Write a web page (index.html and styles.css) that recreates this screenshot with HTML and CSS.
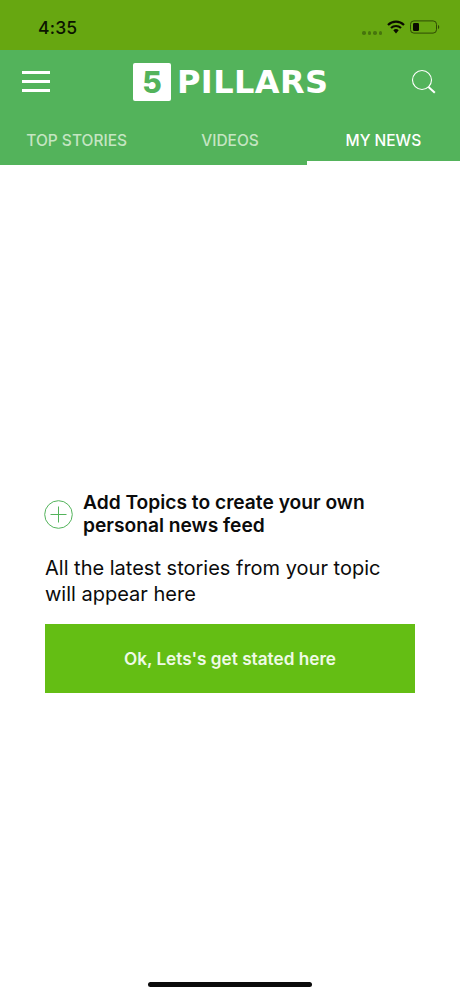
FILE: index.html
```html
<!DOCTYPE html>
<html lang="en">
<head>
<meta charset="utf-8">
<title>5 Pillars</title>
<link rel="stylesheet" href="styles.css">
</head>
<body>
<div class="phone">
  <div class="status">
    <span class="time">4:35</span>
    <div class="status-icons">
      <span class="dots"><i></i><i></i><i></i><i></i></span>
      <svg class="wifi" width="18" height="14" viewBox="0 0 18 14"><path d="M1 5a11.400 11.400 0 0 1 16 0" fill="none" stroke="#0b0b00" stroke-width="2.200"/><path d="M4 8a7.200 7.200 0 0 1 10 0" fill="none" stroke="#0b0b00" stroke-width="2.200"/><path d="M6.300 10.300a3.800 3.800 0 0 1 5.400 0L9 13.500z" fill="#0b0b00"/></svg>
      <svg class="battery" width="30" height="14" viewBox="0 0 30 14"><rect x="0.500" y="0.900" width="26" height="12.200" rx="3.400" fill="none" stroke="#2f4a05"/><rect x="3" y="3" width="6" height="8" rx="1.200" fill="#0b0b00"/><path d="M28 5v4c.8-.3 1.200-1 1.200-2s-.4-1.700-1.200-2z" fill="#2f4a05"/></svg>
    </div>
  </div>
  <header class="appbar">
    <div class="topbar">
      <button class="icon-btn menu" aria-label="Menu"><span></span><span></span><span></span></button>
      <div class="logo"><span class="logo-box">5</span><span class="logo-text">PILLARS</span></div>
      <button class="icon-btn search" aria-label="Search">
        <svg width="26" height="26" viewBox="0 0 26 26"><circle cx="11" cy="11" r="9.500" fill="none" stroke="#fff" stroke-width="1.100"/><path d="M17.500 18l6.300 5.800" stroke="#fff" stroke-width="2" fill="none"/></svg>
      </button>
    </div>
    <nav class="tabs">
      <a class="tab">TOP STORIES</a>
      <a class="tab">VIDEOS</a>
      <a class="tab active">MY NEWS</a>
    </nav>
  </header>
  <main class="content">
    <div class="topic-row">
      <svg class="plus" width="29" height="29" viewBox="0 0 29 29"><circle cx="14.500" cy="14.500" r="13.800" fill="none" stroke="#53b35b" stroke-width="1"/><path d="M14.500 6.500v16M6.500 14.500h16" stroke="#53b35b" stroke-width="1" fill="none"/></svg>
      <h2 class="topic-title">Add Topics to create your own personal news feed</h2>
    </div>
    <p class="lead">All the latest stories from your topic will appear here</p>
    <button class="cta">Ok, Lets's get stated here</button>
  </main>
  <div class="home-indicator"></div>
</div>
</body>
</html>
```
FILE: styles.css
```css
* { box-sizing: border-box; }
html, body { margin: 0; padding: 0; background: #fff; }
body { font-family: Inter, "Liberation Sans", sans-serif; }
.phone { width: 460px; height: 996px; display: flex; flex-direction: column; overflow: hidden; position: relative; background: #fff; }

.status { height: 50px; flex: none; background: #67a711; display: flex; justify-content: space-between; padding: 0 20px 0 38px; }
.time { font-size: 17.500px; font-weight: 500; color: #0b1400; line-height: 20px; margin-top: 18px; letter-spacing: 0.2px; }
.status-icons { display: flex; align-items: flex-start; padding-top: 20px; }
.dots { display: flex; gap: 2px; margin-top: 11px; margin-right: 5px; }
.dots i { width: 3.500px; height: 3.500px; border-radius: 50%; background: #47750d; }
.wifi { margin-right: 5px; }

.appbar { flex: none; height: 115px; background: #53b35b; display: flex; flex-direction: column; }
.topbar { height: 66px; display: flex; align-items: center; justify-content: space-between; padding: 0 23px 0 22px; position: relative; }
.icon-btn { background: none; border: 0; padding: 0; }
.menu { width: 28px; display: flex; flex-direction: column; gap: 6px; margin-top: -3px; }
.menu span { display: block; height: 3px; background: #fff; }
.search { width: 26px; height: 26px; margin-top: -2px; }
.search svg { display: block; }
.logo { position: absolute; left: 133px; top: 13px; display: flex; align-items: center; gap: 6px; }
.logo-box { width: 38px; height: 38px; background: #fff; border-radius: 2px; color: #53b35b; font-size: 30px; font-weight: 800; display: flex; align-items: center; justify-content: center; position: relative; }
.logo-box::after { content: ""; position: absolute; left: 16px; top: 22px; width: 4px; height: 4px; border-radius: 50%; background: #fff; }
.logo-text { color: #fff; font-family: "DejaVu Sans", sans-serif; font-weight: 700; font-size: 32px; letter-spacing: 0.400px; line-height: 38px; }

.tabs { flex: 1; display: grid; grid-template-columns: repeat(3, 1fr); }
.tab { display: flex; align-items: center; justify-content: center; font-size: 15.500px; font-weight: 500; color: #c5e5c2; }
.tab.active { color: #fff; border-bottom: 4px solid #fff; padding-top: 4px; }

.content { padding: 326px 45px 0; flex: 1; }
.topic-row { display: flex; align-items: center; gap: 10px; margin-left: -1px; }
.plus { flex: none; }
.topic-title { margin: 0; font-size: 19.200px; font-weight: 600; line-height: 23px; color: #0b0b0b; }
.lead { margin: 18px 0 0; font-size: 20px; line-height: 26px; font-weight: 400; color: #0b0b0b; width: 360px; }
.cta { display: block; width: 370px; height: 69px; margin-top: 17px; border: 0; background: #64be14; color: #effae6; font-family: Inter, sans-serif; font-size: 17.200px; font-weight: 600; }

.home-indicator { position: absolute; left: 148px; bottom: 9px; width: 164px; height: 5px; border-radius: 3px; background: #0b0b0b; }
```
